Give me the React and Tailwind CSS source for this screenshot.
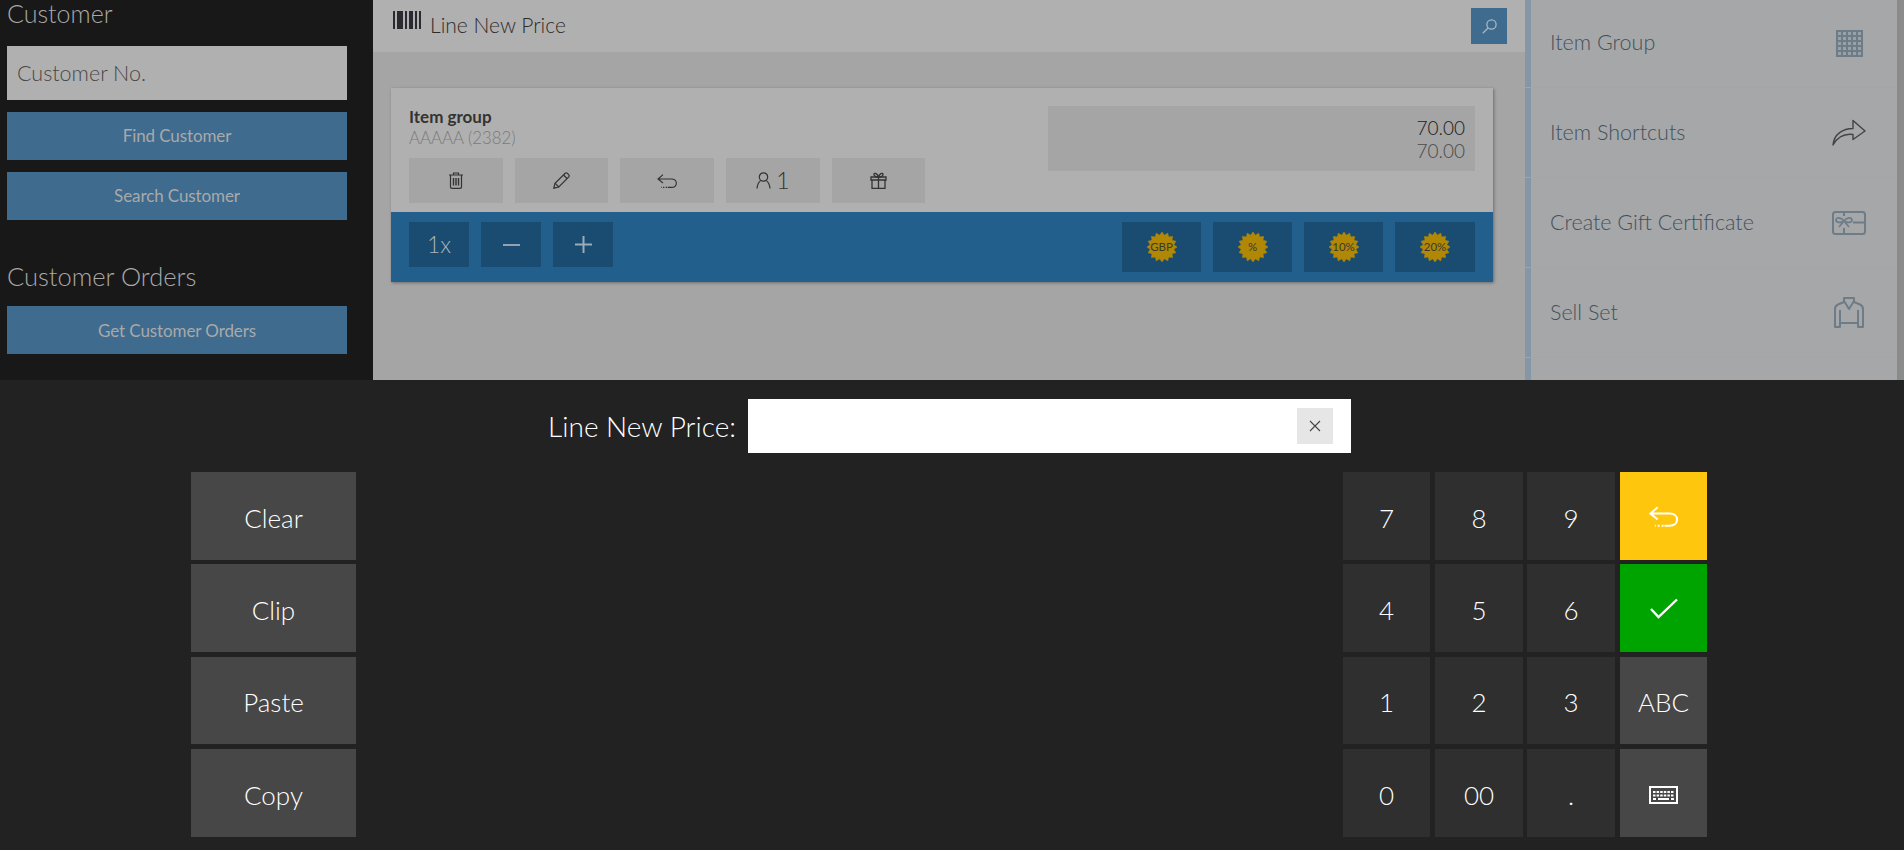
import React from "react";

const rowCls = ["h-[88px]", "mt-1 h-[88px]", "mt-[5px] h-[87px]", "mt-[5px] h-[88px]"];
const colCls = ["w-[87px]", "ml-[5px] w-[88px]", "ml-1 w-[88px]", "ml-[5px] w-[87px]"];

const Undo = ({ w = 20, h = 14, color = "currentColor", sw = 1.2 }) => (
  <svg width={w} height={h} viewBox="0 0 30 21" fill="none" stroke={color} strokeWidth={sw * 1.45}>
    <path d="M9 1 L1.5 7.5 L9 13.5 M1.5 7.5 H21.5 C26 7.5 29 10 29 13.7 C29 17.5 26 20 21.5 20 H16" />
    <path d="M15 20 H6" strokeDasharray="2 2" />
  </svg>
);

const Trash = () => (
  <svg width="16" height="17" viewBox="0 0 16 17" fill="none" stroke="#333" strokeWidth="1.2">
    <path d="M1 3 H15 M5.5 3 V1 H10.5 V3" />
    <path d="M2.5 3 V15 Q2.5 16.4 4 16.4 H12 Q13.5 16.4 13.5 15 V3" />
    <path d="M5.5 6 V13.5 M8 6 V13.5 M10.5 6 V13.5" strokeWidth="1.4" />
  </svg>
);

const Pencil = () => (
  <svg width="17" height="17" viewBox="0 0 17 17" fill="none" stroke="#333" strokeWidth="1.2">
    <path d="M0.8 16.2 L2 11.2 L12.2 1.2 Q13.2 0.4 14.2 1.2 L15.8 2.8 Q16.6 3.8 15.8 4.8 L5.8 15 Z" />
    <path d="M2 11.2 L5.8 15 M10.5 3 L14 6.5" />
  </svg>
);

const Person = () => (
  <svg width="15" height="17" viewBox="0 0 15 17" fill="none" stroke="#333" strokeWidth="1.2">
    <circle cx="7.5" cy="5" r="4.2" />
    <path d="M1 16.5 Q1.5 11 4.6 8.6 M14 16.5 Q13.5 11 10.4 8.6" />
  </svg>
);

const Gift = () => (
  <svg width="17" height="17" viewBox="0 0 17 17" fill="none" stroke="#333" strokeWidth="1.3">
    <path d="M1 5 H16 V8 H1 Z M2 8 V16.3 H15 V8 M8.5 5 V16.3" />
    <path d="M8.5 5 C6 5 3.5 4 4 2 C4.6 0.4 7.5 1.5 8.5 5 C9.5 1.5 12.4 0.4 13 2 C13.5 4 11 5 8.5 5" />
  </svg>
);

const burst = (() => {
  const pts = [];
  const n = 16;
  for (let i = 0; i < n * 2; i++) {
    const a = (Math.PI * i) / n - Math.PI / 2;
    const r = i % 2 === 0 ? 15 : 12;
    pts.push(`${(15 + r * Math.cos(a)).toFixed(2)},${(15 + r * Math.sin(a)).toFixed(2)}`);
  }
  return pts.join(" ");
})();

const Badge = ({ label, cls }) => (
  <div className={`h-[50px] bg-[#1a4b70] flex items-center justify-center ${cls}`}>
    <div className="relative w-[30px] h-[30px] flex items-center justify-center">
      <svg width="30" height="30" viewBox="0 0 30 30" className="absolute inset-0">
        <polygon points={burst} fill="#b08806" stroke="#b08806" strokeWidth="0.6" strokeLinejoin="round" />
      </svg>
      <span className="relative text-[11.5px] leading-none text-[#3a3a30] whitespace-nowrap">{label}</span>
    </div>
  </div>
);

const GridIcon = () => {
  const cells = [];
  for (let r = 0; r < 5; r++) for (let c = 0; c < 5; c++) cells.push([r, c]);
  return (
    <svg width="27" height="27" viewBox="0 0 27 27">
      <rect width="27" height="27" fill="#6e7c88" />
      {cells.map(([r, c]) => (
        <rect key={`${r}-${c}`} x={2 + c * 5} y={2 + r * 5} width="3" height="3" fill="#98a1a8" />
      ))}
    </svg>
  );
};

const ShareIcon = () => (
  <svg width="34" height="27" viewBox="0 0 34 27" fill="none" stroke="#3f4548" strokeWidth="1.4">
    <path d="M1 26 C2 15 11 9.5 21 9.5 V1.5 L33 12 L21 20.5 V15.5 C13 14.5 5.5 18 1 26 Z" strokeLinejoin="round" />
  </svg>
);

const GiftCardIcon = () => (
  <svg width="34" height="24" viewBox="0 0 34 24" fill="none" stroke="#6e7c88" strokeWidth="2">
    <rect x="1" y="1" width="32" height="22" rx="2.5" />
    <path d="M21 11.5 H33 M12 17 V23 M12 1 V5" />
    <path d="M12 10 C9 6 4 6 4 9 C4 12 9 12 12 10 C15 12 20 12 20 9 C20 6 15 6 12 10 Z M12 10 L7 16 M12 10 L17 16" strokeWidth="1.7" />
  </svg>
);

const JacketIcon = () => (
  <svg width="30" height="31" viewBox="0 0 30 31" fill="none" stroke="#6e7c88" strokeWidth="2" strokeLinejoin="round">
    <path d="M10 5 V1 H20 V5 L26 7.5 Q29 9 29 12 V30 H24 V26 H6 V30 H1 V12 Q1 9 4 7.5 Z" />
    <path d="M10 4 L15 12 L20 4 M6 13 V26 M24 13 V26" />
  </svg>
);

const Keyboard = () => (
  <svg width="29" height="18" viewBox="0 0 29 18" fill="none" stroke="#fff">
    <rect x="1" y="1" width="27" height="16" strokeWidth="2" />
    <path d="M4 6 H25 M4 9.5 H25" strokeWidth="2" strokeDasharray="2.5 1.1" />
    <path d="M4 13 H7 M9 13 H20 M22 13 H25" strokeWidth="2" />
  </svg>
);

const ItemButton = ({ cls, children }) => (
  <div className={`h-[45px] bg-[#a5a5a5] flex items-center justify-center ${cls}`}>{children}</div>
);

const BlueButton = ({ children, cls = "" }) => (
  <div className={`w-[60px] h-[45px] bg-[#1a4b70] flex items-center justify-center ${cls}`}>{children}</div>
);

const SideButton = ({ children, cls = "" }) => (
  <div className={`w-[340px] h-12 bg-[#3f6b8e] flex items-center justify-center text-[17px] text-[#a9a9a9] tracking-[-0.1px] ${cls}`}>{children}</div>
);

const MenuRow = ({ label, icon, cls, textCls = "pb-px" }) => (
  <div className={`flex ${cls}`}>
    <div className="w-[6px] bg-[#8596a6] border-b border-[#9aa6b2]" />
    <div className="flex-1 flex items-center justify-between pl-[19px] pr-[31px] border-b border-[#a4a5a7]">
      <span className={`text-[21.5px] font-light text-[#44515b] ${textCls}`}>{label}</span>
      <div className="flex justify-center w-[34px]">{icon}</div>
    </div>
  </div>
);

const Key = ({ c, bg = "bg-[#2f2f2f]", children }) => (
  <div className={`${colCls[c]} ${bg} flex items-center justify-center text-[26px] font-light text-white`}>{children}</div>
);

const numRows = [
  ["7", "8", "9"],
  ["4", "5", "6"],
  ["1", "2", "3"],
  ["0", "00", "."],
];

const lastKey = [
  <Key key="u" c={3} bg="bg-[#ffc60e]"><Undo w={29} h={21} color="#fff" sw={1.4} /></Key>,
  <Key key="k" c={3} bg="bg-[#00a400]">
    <svg width="28" height="21" viewBox="0 0 28 21" fill="none" stroke="#fff" strokeWidth="2.4">
      <path d="M1 11 L8.5 19 L27 1.5" />
    </svg>
  </Key>,
  <Key key="a" c={3} bg="bg-[#474747]"><span className="pt-1">ABC</span></Key>,
  <Key key="b" c={3} bg="bg-[#474747]"><span className="pt-1"><Keyboard /></span></Key>,
];

export default function App() {
  return (
    <div className="w-[1904px] h-[850px] overflow-hidden flex flex-col [font-family:Lato,sans-serif]">
      <div className="h-[380px] flex">
        <aside className="w-[373px] bg-[#181818] px-[7px]">
          <div className="h-7 leading-[26px] text-[25px] font-light text-[#a8a8a8]">Customer</div>
          <div className="mt-[18px] w-[340px] h-[54px] bg-[#b0b0b0] flex items-center px-[10px] text-[21.5px] font-light text-[#484848]">Customer No.</div>
          <SideButton cls="mt-3">Find Customer</SideButton>
          <SideButton cls="mt-3">Search Customer</SideButton>
          <div className="mt-[43px] h-7 leading-[26px] text-[25.5px] font-light text-[#a8a8a8]">Customer Orders</div>
          <SideButton cls="mt-[15px] pt-px">Get Customer Orders</SideButton>
        </aside>

        <main className="w-[1152px] bg-[#a5a5a5]">
          <header className="h-[52px] bg-[#b0b0b0] flex items-center justify-between pl-5 pr-[18px]">
            <div className="flex items-start pb-[2px]">
              <svg width="28" height="18" viewBox="0 0 28 18" fill="#2a2a30">
                <rect x="0" width="2" height="18" />
                <rect x="4" width="6" height="18" />
                <rect x="12" width="2" height="18" />
                <rect x="16" width="4" height="18" />
                <rect x="22" width="2" height="18" />
                <rect x="26" width="2" height="18" />
              </svg>
              <span className="ml-[9px] text-[21px] font-light text-[#2c2c2c] leading-7">Line New Price</span>
            </div>
            <div className="w-9 h-9 bg-[#3f6b8e] flex items-center justify-center">
              <svg width="15" height="15" viewBox="0 0 15 15" fill="none" stroke="#a9b6c2" strokeWidth="1.3">
                <circle cx="9.5" cy="5.5" r="4.6" />
                <path d="M6 9 L0.8 14.2" />
              </svg>
            </div>
          </header>

          <section className="mt-9 ml-[18px] mr-8 shadow-[1px_1px_3px_rgba(0,0,0,0.35)]">
            <div className="h-[124px] bg-[#b0b0b0] px-[18px] flex justify-between">
              <div>
                <div className="mt-[19px] h-5 leading-5 text-[17px] font-bold text-[#333]">Item group</div>
                <div className="mt-px h-5 leading-5 text-[16.8px] font-light text-[#7a7a7a]">AAAAA (2382)</div>
                <div className="mt-[10px] flex">
                  <ItemButton cls="w-[94px]"><Trash /></ItemButton>
                  <ItemButton cls="ml-3 w-[93px]"><Pencil /></ItemButton>
                  <ItemButton cls="ml-3 w-[94px]"><Undo w={20} h={14} color="#333" /></ItemButton>
                  <ItemButton cls="ml-3 w-[94px]">
                    <Person />
                    <span className="ml-[5px] text-[23px] font-light text-[#333] leading-none">1</span>
                  </ItemButton>
                  <ItemButton cls="ml-3 w-[93px]"><Gift /></ItemButton>
                </div>
              </div>
              <div className="mt-[18px] w-[427px] h-[65px] bg-[#a5a5a5] pr-[10px] pt-[10px] text-right text-[19px] font-light text-[#1a1a1a]">
                <div className="leading-[23px]">70.00</div>
                <div className="leading-[23px] text-[#4a4a4a]">70.00</div>
              </div>
            </div>
            <div className="h-[70px] bg-[#225f8c] pt-[10px] px-[18px] flex justify-between">
              <div className="flex">
                <BlueButton><span className="text-[23px] font-light text-[#a9b4bd]">1x</span></BlueButton>
                <BlueButton cls="ml-3">
                  <svg width="17" height="2" viewBox="0 0 17 2"><rect width="17" height="2" fill="#8fa3b3" /></svg>
                </BlueButton>
                <BlueButton cls="ml-3">
                  <svg width="17" height="17" viewBox="0 0 17 17" fill="#9aabb9">
                    <rect y="7.5" width="17" height="2" />
                    <rect x="7.5" width="2" height="17" />
                  </svg>
                </BlueButton>
              </div>
              <div className="flex">
                <Badge label="GBP" cls="w-[79px]" />
                <Badge label="%" cls="ml-3 w-[79px]" />
                <Badge label="10%" cls="ml-3 w-[79px]" />
                <Badge label="20%" cls="ml-3 w-[80px]" />
              </div>
            </div>
          </section>
        </main>

        <aside className="w-[372px] bg-[#a6a7a9]">
          <MenuRow label="Item Group" icon={<GridIcon />} cls="h-[88px]" textCls="pb-[3px]" />
          <MenuRow label="Item Shortcuts" icon={<ShareIcon />} cls="h-[90px]" />
          <MenuRow label="Create Gift Certificate" icon={<GiftCardIcon />} cls="h-[90px]" />
          <MenuRow label="Sell Set" icon={<JacketIcon />} cls="h-[90px]" />
          <div className="h-[22px] w-[6px] bg-[#8596a6]" />
        </aside>

        <div className="w-[7px] bg-[#8b8b8b]" />
      </div>

      <div className="h-[470px] bg-[#222222]">
        <div className="pt-[19px] flex items-center">
          <div className="w-[736px] text-right text-[28px] font-light text-white leading-[54px]">Line New Price:</div>
          <div className="ml-3 w-[603px] h-[54px] bg-white flex items-center justify-end pr-[18px]">
            <div className="w-9 h-9 bg-[#e6e6e6] flex items-center justify-center">
              <svg width="12" height="12" viewBox="0 0 12 12" stroke="#444" strokeWidth="1.1">
                <path d="M1 1 L11 11 M11 1 L1 11" />
              </svg>
            </div>
          </div>
        </div>

        <div className="mt-[19px] pl-[191px] pr-[197px] flex justify-between">
          <div className="w-[165px]">
            {["Clear", "Clip", "Paste", "Copy"].map((t, i) => (
              <div key={t} className={`${rowCls[i]} bg-[#474747] pt-1 flex items-center justify-center text-[26px] font-light text-white`}>{t}</div>
            ))}
          </div>
          <div className="w-[364px]">
            {numRows.map((row, i) => (
              <div key={i} className={`${rowCls[i]} flex`}>
                {row.map((k, c) => (
                  <Key key={k} c={c}><span className="pt-1">{k}</span></Key>
                ))}
                {lastKey[i]}
              </div>
            ))}
          </div>
        </div>
      </div>
    </div>
  );
}
